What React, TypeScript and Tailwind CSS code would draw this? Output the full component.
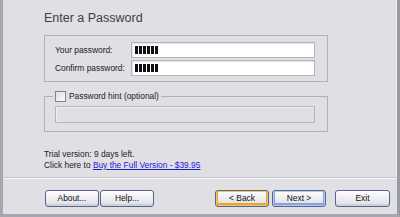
import React from "react";

const font = "font-['Liberation_Sans',Arial,sans-serif]";

function PasswordField() {
  return (
    <div className="flex h-[16px] w-[184px] items-center gap-[1.5px] border border-[#b4b4bc] bg-white pl-[3px] shadow-[inset_1px_1px_0_#e4e4e8]">
      {[0, 1, 2, 3, 4, 5].map((i) => (
        <div key={i} className="h-[8px] w-[2.5px] bg-[#111]" />
      ))}
    </div>
  );
}

function Button({ label, variant, wide }: { label: string; variant?: "focus" | "default"; wide?: boolean }) {
  const ring =
    variant === "focus"
      ? "shadow-[inset_0_0_0_1px_#f6c65a,inset_0_-1px_0_2px_#e8a53a]"
      : variant === "default"
      ? "shadow-[inset_0_0_0_1px_#b8c8f0,inset_0_-1px_0_2px_#8aa2e0]"
      : "shadow-[inset_0_-2px_0_#cfcfd8]";
  return (
    <button
      className={`flex h-[17px] ${wide ? "w-[55px]" : "w-[54px]"} items-center justify-center rounded-[3px] border border-[#55668c] bg-gradient-to-b from-white to-[#dcdce4] text-[8.4px] leading-none text-[#111] ${ring}`}
    >
      {label}
    </button>
  );
}

export default function App() {
  return (
    <div
      className={`${font} flex h-[217px] w-[400px] flex-col border-b-[3px] border-l-[3px] border-r-[3px] border-b-[#a6a6b0] border-l-[#a6a6b0] border-r-[#9a9aa6] bg-[#e0dfe3] text-[#222]`}
    >
      <div className="flex flex-1 flex-col border-r border-r-[#f2f2f4] pl-[41px]">
        <h1 className="pt-[11px] text-[12.5px] leading-[14px] text-[#404040]">Enter a Password</h1>

        <div className="mt-[10px] flex w-[284px] flex-col gap-[2px] border border-[#b0b0b8] pb-[5px] pl-[10px] pr-[12px] pt-[6px]">
          <div className="flex items-center justify-between">
            <span className="text-[8.4px] leading-none">Your password:</span>
            <PasswordField />
          </div>
          <div className="flex items-center justify-between">
            <span className="text-[8.4px] leading-none">Confirm password:</span>
            <PasswordField />
          </div>
        </div>

        <fieldset className="mt-[9px] w-[284px] border border-[#b0b0b8] pb-[8px] pl-[8px] pr-[12px]">
          <legend className="flex h-[11px] items-center gap-[3px] px-[2px]">
            <span className="h-[11px] w-[11px] border border-[#7584a4] bg-gradient-to-br from-[#dcdce4] to-white" />
            <span className="text-[8.4px] leading-none">Password hint (optional)</span>
          </legend>
          <div className="ml-[2px] mt-[4px] h-[17px] w-[260px] border border-[#b4b4bc] bg-[#e0dfe3] shadow-[inset_1px_1px_0_#eeeef0]" />
        </fieldset>

        <div className="mt-[17px] text-[8.4px] leading-[11px]">
          <p>Trial version: 9 days left.</p>
          <p>
            Click here to <a className="text-[#1c1cd0] underline">Buy the Full Version - $39.95</a>
          </p>
        </div>
      </div>

      <div className="border-t border-t-[#c4c4cc]">
        <div className="border-t border-t-[#f6f6f8]" />
      </div>

      <div className="flex h-[35px] items-start pt-[11px]">
        <div className="ml-[42px] flex gap-[1px]">
          <Button label="About..." />
          <Button label="Help..." />
        </div>
        <div className="ml-auto mr-[7px] flex">
          <Button label="< Back" variant="focus" />
          <div className="ml-[3px]">
            <Button label="Next >" variant="default" />
          </div>
          <div className="ml-[9px]">
            <Button label="Exit" wide />
          </div>
        </div>
      </div>
    </div>
  );
}
